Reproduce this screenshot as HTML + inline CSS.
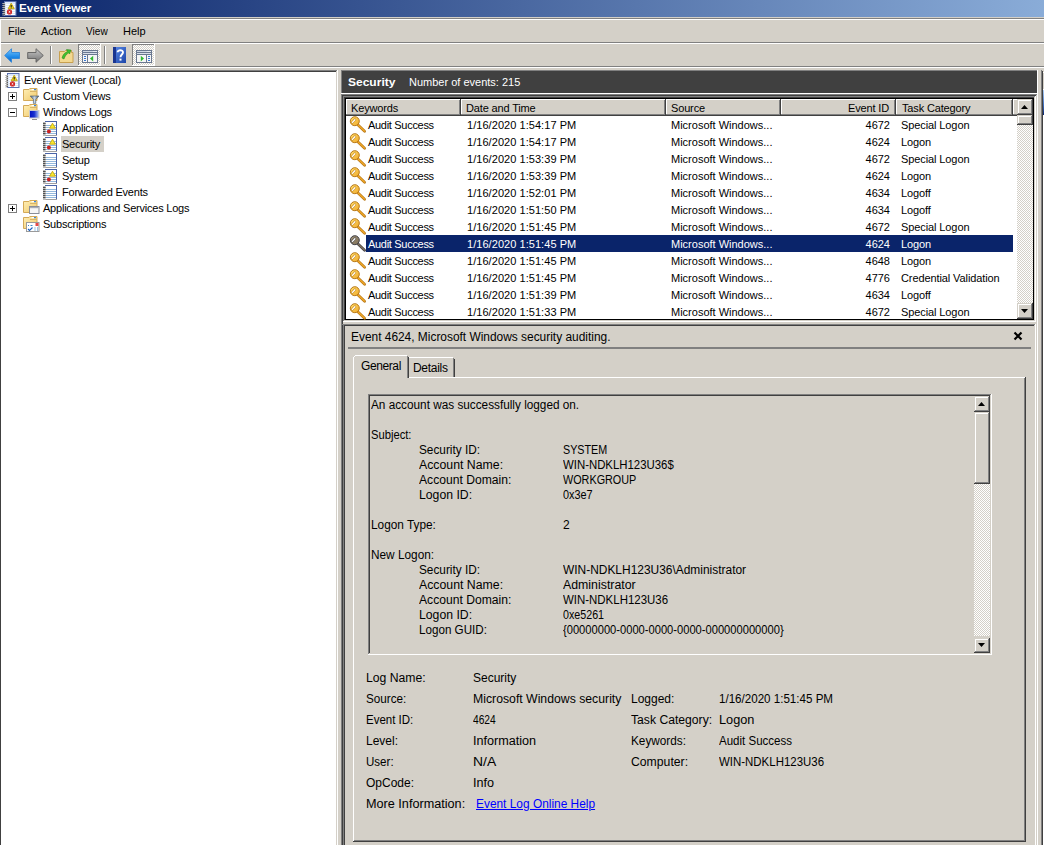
<!DOCTYPE html><html><head><meta charset="utf-8"><style>
html,body{margin:0;padding:0;width:1044px;height:845px;overflow:hidden;background:#d4d0c8;position:relative}
body>div,body>span,body>svg{position:absolute;display:block}
.t{font-family:"Liberation Sans",sans-serif;line-height:1.15;white-space:nowrap}
svg{overflow:visible}
</style></head><body>
<div style="left:0px;top:0px;width:1044px;height:17px;background:linear-gradient(90deg,#0a246a 0px,#a6caf0 1273px);"></div>
<svg style="left:2px;top:1px" width="15" height="16" viewBox="0 0 15 16"><rect x="2.5" y="0.5" width="11.5" height="14" fill="#dce8f8" stroke="#5a70b0"/>
<path d="M4 3.5h9M4 5.5h9M4 7.5h9M4 9.5h9M4 11.5h9M4 13.5h9" stroke="#ffffff"/>
<path d="M0.3 2.5h2.7M0.3 4.5h2.7M0.3 6.5h2.7M0.3 8.5h2.7M0.3 10.5h2.7M0.3 12.5h2.7M0.3 14h2.7" stroke="#b0b0b0" stroke-width="1.1"/><path d="M1.5 3.5h1.5M1.5 5.5h1.5M1.5 7.5h1.5M1.5 9.5h1.5M1.5 11.5h1.5M1.5 13.5h1.5" stroke="#606060"/>
<path d="M9.2 2.2 L12.3 7.8 L6.1 7.8Z" fill="#f0d820" stroke="#b89800" stroke-width="0.8" stroke-linejoin="round"/>
<path d="M9.2 4v2" stroke="#202020" stroke-width="1.1"/><rect x="8.7" y="6.4" width="1" height="0.9" fill="#202020"/>
<circle cx="7.5" cy="10.9" r="2.6" fill="#d02424"/><path d="M6.7 10.1l1.6 1.6M8.3 10.1l-1.6 1.6" stroke="#fff" stroke-width="0.9"/></svg>
<span class="t" style="left:19px;top:2.4px;font-size:11.5px;color:#fff;font-weight:bold;letter-spacing:0px;transform:scaleX(1.0141);transform-origin:0 0;">Event Viewer</span>
<div style="left:0px;top:17px;width:1044px;height:1px;background:#d4d0c8;"></div>
<div style="left:0px;top:18px;width:1044px;height:1px;background:#808080;"></div>
<div style="left:0px;top:19px;width:1044px;height:1px;background:#ffffff;"></div>
<div style="left:0px;top:20px;width:1px;height:23px;background:#ffffff;"></div>
<div style="left:1px;top:42px;width:1043px;height:1px;background:#808080;"></div>
<div style="left:0px;top:43px;width:1044px;height:1px;background:#ffffff;"></div>
<span class="t" style="left:8px;top:24.86px;font-size:11px;color:#000;font-weight:normal;letter-spacing:0px;transform:scaleX(1.0000);transform-origin:0 0;">File</span>
<span class="t" style="left:41px;top:24.86px;font-size:11px;color:#000;font-weight:normal;letter-spacing:0px;transform:scaleX(1.0000);transform-origin:0 0;">Action</span>
<span class="t" style="left:86px;top:24.86px;font-size:11px;color:#000;font-weight:normal;letter-spacing:0px;transform:scaleX(0.9167);transform-origin:0 0;">View</span>
<span class="t" style="left:123px;top:24.86px;font-size:11px;color:#000;font-weight:normal;letter-spacing:0px;transform:scaleX(1.0000);transform-origin:0 0;">Help</span>
<div style="left:0px;top:44px;width:1px;height:22px;background:#ffffff;"></div>
<div style="left:0px;top:66px;width:1044px;height:1px;background:#808080;"></div>
<div style="left:0px;top:67px;width:1044px;height:1px;background:#ffffff;"></div>
<svg style="left:4px;top:48px" width="17" height="15" viewBox="0 0 17 15"><defs><linearGradient id="gb" x1="0" y1="0" x2="0" y2="1"><stop offset="0" stop-color="#7cc8ff"/><stop offset="0.6" stop-color="#1d8ae8"/><stop offset="1" stop-color="#0a5cc0"/></linearGradient></defs>
<path d="M0.7 7.5 L7.5 0.7 L7.5 4.5 L15.5 4.5 L15.5 10.5 L7.5 10.5 L7.5 14.3 Z" fill="url(#gb)" stroke="#2f86d8" stroke-width="0.9"/></svg>
<svg style="left:27px;top:48px" width="17" height="15" viewBox="0 0 17 15"><defs><linearGradient id="gg" x1="0" y1="0" x2="0" y2="1"><stop offset="0" stop-color="#c8c8c8"/><stop offset="1" stop-color="#707070"/></linearGradient></defs>
<path d="M16.3 7.5 L9 0.7 L9 4.5 L0.7 4.5 L0.7 10.5 L9 10.5 L9 14.3 Z" fill="url(#gg)" stroke="#606060" stroke-width="0.9"/></svg>
<div style="left:50px;top:46px;width:1px;height:18px;background:#808080;"></div>
<div style="left:51px;top:46px;width:1px;height:18px;background:#ffffff;"></div>
<svg style="left:59px;top:48px" width="15" height="15" viewBox="0 0 15 15"><path d="M0.5 3.5 h5 l1 -1 h6 v2 h1.5 v10 h-13.5z" fill="#f3d890" stroke="#c8a050"/>
<path d="M3 10 C4 6 6 4.5 8.5 3.5 L7.5 1.5 L12 2 L10.5 6 L9.8 4.8 C7.5 6 6 8 5 11z" fill="#40c030" stroke="#208010" stroke-width="0.5"/></svg>
<div style="left:78px;top:44px;width:23px;height:22px;background:repeating-conic-gradient(#ffffff 0 25%, #d4d0c8 0 50%) 0 0/2px 2px;"></div>
<div style="left:78px;top:44px;width:23px;height:1px;background:#808080;"></div>
<div style="left:78px;top:44px;width:1px;height:22px;background:#808080;"></div>
<div style="left:78px;top:65px;width:23px;height:1px;background:#ffffff;"></div>
<div style="left:100px;top:44px;width:1px;height:22px;background:#ffffff;"></div>
<div style="left:132px;top:44px;width:23px;height:22px;background:repeating-conic-gradient(#ffffff 0 25%, #d4d0c8 0 50%) 0 0/2px 2px;"></div>
<div style="left:132px;top:44px;width:23px;height:1px;background:#808080;"></div>
<div style="left:132px;top:44px;width:1px;height:22px;background:#808080;"></div>
<div style="left:132px;top:65px;width:23px;height:1px;background:#ffffff;"></div>
<div style="left:154px;top:44px;width:1px;height:22px;background:#ffffff;"></div>
<svg style="left:82px;top:50px" width="16" height="13" viewBox="0 0 16 13"><rect x="0.5" y="0.5" width="15" height="12" fill="#f6f6f6" stroke="#6a7890"/>
<rect x="1" y="1" width="14" height="1.5" fill="#d0d8e4"/><rect x="11.5" y="1" width="1" height="1" fill="#fff"/><rect x="13.5" y="1" width="1" height="1" fill="#fff"/>
<path d="M1 2.5h14M1 4.5h14" stroke="#6a7890"/><rect x="1" y="3" width="14" height="1" fill="#d8dee8"/>
<path d="M5.5 5v7" stroke="#6a7890"/>
<path d="M2 6.5h2M2 8.5h2M2 10.5h2" stroke="#3a78d0"/>
<path d="M11.2 5.8 L8 8.6 L11.2 11.4 Z" fill="#30b830"/></svg>
<div style="left:104px;top:46px;width:1px;height:18px;background:#808080;"></div>
<div style="left:105px;top:46px;width:1px;height:18px;background:#ffffff;"></div>
<svg style="left:113px;top:47px" width="13" height="16" viewBox="0 0 13 16"><defs><linearGradient id="hb" x1="0" y1="0" x2="1" y2="1"><stop offset="0" stop-color="#5a8ae8"/><stop offset="1" stop-color="#1e46a8"/></linearGradient></defs>
<rect x="0" y="0" width="13" height="16" fill="url(#hb)"/><rect x="0" y="0" width="3" height="16" fill="#1a3590"/>
<path d="M4.6 5.2 C4.6 2.6 10 2.6 10 5.2 C10 7.4 7.5 7.6 7.5 10.2" stroke="#fff" stroke-width="1.9" fill="none"/><rect x="6.5" y="11.6" width="2" height="2" fill="#fff"/></svg>
<svg style="left:136px;top:50px" width="16" height="13" viewBox="0 0 16 13"><rect x="0.5" y="0.5" width="15" height="12" fill="#f6f6f6" stroke="#6a7890"/>
<rect x="1" y="1" width="14" height="1.5" fill="#d0d8e4"/><rect x="11.5" y="1" width="1" height="1" fill="#fff"/><rect x="13.5" y="1" width="1" height="1" fill="#fff"/>
<path d="M1 2.5h14M1 4.5h14" stroke="#6a7890"/><rect x="1" y="3" width="14" height="1" fill="#d8dee8"/>
<path d="M10.5 5v7" stroke="#6a7890"/>
<path d="M12 6.5h2M12 8.5h2M12 10.5h2" stroke="#3a78d0"/>
<path d="M4.8 5.8 L8 8.6 L4.8 11.4 Z" fill="#30b830"/></svg>
<div style="left:1px;top:72px;width:335px;height:773px;background:#ffffff;"></div>
<div style="left:0px;top:70px;width:337px;height:1px;background:#808080;"></div>
<div style="left:0px;top:71px;width:336px;height:1px;background:#404040;"></div>
<div style="left:0px;top:71px;width:1px;height:774px;background:#404040;"></div>
<div style="left:336px;top:71px;width:1px;height:774px;background:#d4d0c8;"></div>
<div style="left:337px;top:70px;width:1px;height:775px;background:#ffffff;"></div>
<svg style="left:5px;top:73px" width="15" height="16" viewBox="0 0 15 16"><rect x="2.5" y="0.5" width="11.5" height="14" fill="#dce8f8" stroke="#5a70b0"/>
<path d="M4 3.5h9M4 5.5h9M4 7.5h9M4 9.5h9M4 11.5h9M4 13.5h9" stroke="#ffffff"/>
<path d="M0.3 2.5h2.7M0.3 4.5h2.7M0.3 6.5h2.7M0.3 8.5h2.7M0.3 10.5h2.7M0.3 12.5h2.7M0.3 14h2.7" stroke="#b0b0b0" stroke-width="1.1"/><path d="M1.5 3.5h1.5M1.5 5.5h1.5M1.5 7.5h1.5M1.5 9.5h1.5M1.5 11.5h1.5M1.5 13.5h1.5" stroke="#606060"/>
<path d="M9.2 2.2 L12.3 7.8 L6.1 7.8Z" fill="#f0d820" stroke="#b89800" stroke-width="0.8" stroke-linejoin="round"/>
<path d="M9.2 4v2" stroke="#202020" stroke-width="1.1"/><rect x="8.7" y="6.4" width="1" height="0.9" fill="#202020"/>
<circle cx="7.5" cy="10.9" r="2.6" fill="#d02424"/><path d="M6.7 10.1l1.6 1.6M8.3 10.1l-1.6 1.6" stroke="#fff" stroke-width="0.9"/></svg>
<span class="t" style="left:24px;top:73.86px;font-size:11px;color:#000;font-weight:normal;letter-spacing:-0.22px;">Event Viewer (Local)</span>
<svg style="left:8px;top:92px" width="9" height="9" viewBox="0 0 9 9"><rect x="0.5" y="0.5" width="8" height="8" fill="#fff" stroke="#808080"/><path d="M2 4.5h5" stroke="#000"/><path d="M4.5 2v5" stroke="#000"/></svg>
<svg style="left:23px;top:88px" width="17" height="17" viewBox="0 0 17 17"><defs><linearGradient id="fg" x1="0" y1="0" x2="1" y2="1"><stop offset="0" stop-color="#fff0b8"/><stop offset="1" stop-color="#f0c868"/></linearGradient></defs>
<path d="M0.5 1.5h5.5l0.8 -1h7.2v12h-13.5z" fill="url(#fg)" stroke="#d4aa58"/>
<path d="M7 3.5h7" stroke="#d8b468"/><rect x="8.5" y="1" width="2.5" height="1.2" fill="#fff"/><rect x="11" y="1" width="2" height="1.2" fill="#3a88e0"/><defs><linearGradient id="fu" x1="0" y1="0" x2="1" y2="0"><stop offset="0" stop-color="#506070"/><stop offset="0.5" stop-color="#c8d8e8"/><stop offset="1" stop-color="#405060"/></linearGradient></defs><path d="M7.2 8h8.8l-3.2 3.4v4h-2.4v-4z" fill="url(#fu)" stroke="#4a5a6a" stroke-width="0.6"/></svg>
<span class="t" style="left:43px;top:89.86px;font-size:11px;color:#000;font-weight:normal;letter-spacing:-0.22px;">Custom Views</span>
<svg style="left:8px;top:108px" width="9" height="9" viewBox="0 0 9 9"><rect x="0.5" y="0.5" width="8" height="8" fill="#fff" stroke="#808080"/><path d="M2 4.5h5" stroke="#000"/></svg>
<svg style="left:23px;top:104px" width="17" height="17" viewBox="0 0 17 17"><defs><linearGradient id="fg" x1="0" y1="0" x2="1" y2="1"><stop offset="0" stop-color="#fff0b8"/><stop offset="1" stop-color="#f0c868"/></linearGradient></defs>
<path d="M0.5 1.5h5.5l0.8 -1h7.2v12h-13.5z" fill="url(#fg)" stroke="#d4aa58"/>
<path d="M7 3.5h7" stroke="#d8b468"/><rect x="8.5" y="1" width="2.5" height="1.2" fill="#fff"/><rect x="11" y="1" width="2" height="1.2" fill="#3a88e0"/><defs><linearGradient id="mo" x1="0" y1="0" x2="1" y2="0"><stop offset="0" stop-color="#0010c0"/><stop offset="0.5" stop-color="#1830d0"/><stop offset="1" stop-color="#b0c8f0"/></linearGradient></defs><rect x="6.5" y="6.5" width="9.5" height="7.5" fill="url(#mo)" stroke="#c8c8c8"/><path d="M9 15.5h5" stroke="#909090"/></svg>
<span class="t" style="left:43px;top:105.86px;font-size:11px;color:#000;font-weight:normal;letter-spacing:-0.22px;">Windows Logs</span>
<svg style="left:43px;top:121px" width="14" height="15" viewBox="0 0 14 15"><rect x="2" y="0" width="12" height="15" fill="#fff"/>
<path d="M2 0.5h12M13.5 0v15" stroke="#4a64a8"/><path d="M2 14.5h12" stroke="#a0a0a0"/>
<path d="M3 4.5h10M3 6.5h10M3 8.5h10M3 10.5h10M3 12.5h10" stroke="#94b8dc"/>
<rect x="0" y="1" width="2.6" height="14" fill="#b8b8b8"/>
<path d="M0 2.5h2.6M0 4.5h2.6M0 6.5h2.6M0 8.5h2.6M0 10.5h2.6M0 12.5h2.6" stroke="#505050"/><path d="M9.5 2.2 L12.4 7.2 L6.6 7.2Z" fill="#f8e830" stroke="#c0a000" stroke-width="0.8" stroke-linejoin="round"/>
<circle cx="5.9" cy="10.5" r="2" fill="#c82020"/></svg>
<span class="t" style="left:62px;top:121.86px;font-size:11px;color:#000;font-weight:normal;letter-spacing:-0.22px;">Application</span>
<div style="left:61px;top:136px;width:43px;height:16px;background:#d4d0c8;"></div>
<svg style="left:43px;top:137px" width="14" height="15" viewBox="0 0 14 15"><rect x="2" y="0" width="12" height="15" fill="#fff"/>
<path d="M2 0.5h12M13.5 0v15" stroke="#4a64a8"/><path d="M2 14.5h12" stroke="#a0a0a0"/>
<path d="M3 4.5h10M3 6.5h10M3 8.5h10M3 10.5h10M3 12.5h10" stroke="#94b8dc"/>
<rect x="0" y="1" width="2.6" height="14" fill="#b8b8b8"/>
<path d="M0 2.5h2.6M0 4.5h2.6M0 6.5h2.6M0 8.5h2.6M0 10.5h2.6M0 12.5h2.6" stroke="#505050"/><path d="M9.5 2.2 L12.4 7.2 L6.6 7.2Z" fill="#f8e830" stroke="#c0a000" stroke-width="0.8" stroke-linejoin="round"/>
<circle cx="5.9" cy="10.5" r="2" fill="#c82020"/></svg>
<span class="t" style="left:62px;top:137.86px;font-size:11px;color:#000;font-weight:normal;letter-spacing:-0.22px;">Security</span>
<svg style="left:43px;top:153px" width="14" height="15" viewBox="0 0 14 15"><rect x="2" y="0" width="12" height="15" fill="#fff"/>
<path d="M2 0.5h12M13.5 0v15" stroke="#4a64a8"/><path d="M2 14.5h12" stroke="#a0a0a0"/>
<path d="M3 4.5h10M3 6.5h10M3 8.5h10M3 10.5h10M3 12.5h10" stroke="#94b8dc"/>
<rect x="0" y="1" width="2.6" height="14" fill="#b8b8b8"/>
<path d="M0 2.5h2.6M0 4.5h2.6M0 6.5h2.6M0 8.5h2.6M0 10.5h2.6M0 12.5h2.6" stroke="#505050"/></svg>
<span class="t" style="left:62px;top:153.86px;font-size:11px;color:#000;font-weight:normal;letter-spacing:-0.22px;">Setup</span>
<svg style="left:43px;top:169px" width="14" height="15" viewBox="0 0 14 15"><rect x="2" y="0" width="12" height="15" fill="#fff"/>
<path d="M2 0.5h12M13.5 0v15" stroke="#4a64a8"/><path d="M2 14.5h12" stroke="#a0a0a0"/>
<path d="M3 4.5h10M3 6.5h10M3 8.5h10M3 10.5h10M3 12.5h10" stroke="#94b8dc"/>
<rect x="0" y="1" width="2.6" height="14" fill="#b8b8b8"/>
<path d="M0 2.5h2.6M0 4.5h2.6M0 6.5h2.6M0 8.5h2.6M0 10.5h2.6M0 12.5h2.6" stroke="#505050"/><path d="M9.5 2.2 L12.4 7.2 L6.6 7.2Z" fill="#f8e830" stroke="#c0a000" stroke-width="0.8" stroke-linejoin="round"/>
<circle cx="5.9" cy="10.5" r="2" fill="#c82020"/></svg>
<span class="t" style="left:62px;top:169.86px;font-size:11px;color:#000;font-weight:normal;letter-spacing:-0.22px;">System</span>
<svg style="left:43px;top:185px" width="14" height="15" viewBox="0 0 14 15"><rect x="2" y="0" width="12" height="15" fill="#fff"/>
<path d="M2 0.5h12M13.5 0v15" stroke="#4a64a8"/><path d="M2 14.5h12" stroke="#a0a0a0"/>
<path d="M3 4.5h10M3 6.5h10M3 8.5h10M3 10.5h10M3 12.5h10" stroke="#94b8dc"/>
<rect x="0" y="1" width="2.6" height="14" fill="#b8b8b8"/>
<path d="M0 2.5h2.6M0 4.5h2.6M0 6.5h2.6M0 8.5h2.6M0 10.5h2.6M0 12.5h2.6" stroke="#505050"/></svg>
<span class="t" style="left:62px;top:185.86px;font-size:11px;color:#000;font-weight:normal;letter-spacing:-0.22px;">Forwarded Events</span>
<svg style="left:8px;top:204px" width="9" height="9" viewBox="0 0 9 9"><rect x="0.5" y="0.5" width="8" height="8" fill="#fff" stroke="#808080"/><path d="M2 4.5h5" stroke="#000"/><path d="M4.5 2v5" stroke="#000"/></svg>
<svg style="left:23px;top:200px" width="17" height="17" viewBox="0 0 17 17"><defs><linearGradient id="fg" x1="0" y1="0" x2="1" y2="1"><stop offset="0" stop-color="#fff0b8"/><stop offset="1" stop-color="#f0c868"/></linearGradient></defs>
<path d="M0.5 1.5h5.5l0.8 -1h7.2v12h-13.5z" fill="url(#fg)" stroke="#d4aa58"/>
<path d="M7 3.5h7" stroke="#d8b468"/><rect x="8.5" y="1" width="2.5" height="1.2" fill="#fff"/><rect x="11" y="1" width="2" height="1.2" fill="#3a88e0"/><rect x="6.5" y="6.5" width="9.5" height="7" fill="#f6f6f6" stroke="#8a8e98"/><rect x="7" y="7" width="8.5" height="1.2" fill="#a8acb4"/></svg>
<span class="t" style="left:43px;top:201.86px;font-size:11px;color:#000;font-weight:normal;letter-spacing:-0.22px;">Applications and Services Logs</span>
<svg style="left:23px;top:216px" width="17" height="17" viewBox="0 0 17 17"><defs><linearGradient id="fg" x1="0" y1="0" x2="1" y2="1"><stop offset="0" stop-color="#fff0b8"/><stop offset="1" stop-color="#f0c868"/></linearGradient></defs>
<path d="M0.5 1.5h5.5l0.8 -1h7.2v12h-13.5z" fill="url(#fg)" stroke="#d4aa58"/>
<path d="M7 3.5h7" stroke="#d8b468"/><rect x="8.5" y="1" width="2.5" height="1.2" fill="#fff"/><rect x="11" y="1" width="2" height="1.2" fill="#3a88e0"/><rect x="3.5" y="6.5" width="12.5" height="9" fill="#fff" stroke="#9a9a9a"/><rect x="12.5" y="7" width="3" height="3" fill="#e84848"/><path d="M5 9.5h1M7.5 9.5h2M11.5 12h1M14 12h1M11.5 14h1M14 14h1" stroke="#3a88c8"/><path d="M5 13l1.5 1.5 3-3" stroke="#1a60c0" stroke-width="1.1" fill="none"/></svg>
<span class="t" style="left:43px;top:217.86px;font-size:11px;color:#000;font-weight:normal;letter-spacing:-0.22px;">Subscriptions</span>
<div style="left:342px;top:71px;width:695px;height:22px;background:#404040;"></div>
<div style="left:341px;top:70px;width:696px;height:1px;background:#808080;"></div>
<div style="left:341px;top:70px;width:1px;height:23px;background:#808080;"></div>
<span class="t" style="left:348px;top:76.4px;font-size:11.5px;color:#fff;font-weight:bold;letter-spacing:0px;transform:scaleX(1.0444);transform-origin:0 0;">Security</span>
<span class="t" style="left:409px;top:75.86px;font-size:11px;color:#fff;font-weight:normal;letter-spacing:0px;">Number of events: 215</span>
<div style="left:341px;top:93px;width:696px;height:1px;background:#ffffff;"></div>
<div style="left:1037px;top:70px;width:1px;height:775px;background:#ffffff;"></div>
<div style="left:1041px;top:70px;width:1px;height:775px;background:#808080;"></div>
<div style="left:1042px;top:71px;width:1px;height:774px;background:#404040;"></div>
<div style="left:1043px;top:72px;width:1px;height:773px;background:#ffffff;"></div>
<div style="left:1043px;top:73px;width:1px;height:16px;background:#d4d0c8;"></div>
<div style="left:1043px;top:90px;width:1px;height:25px;background:linear-gradient(180deg,#b0d0f8,#4070c0 60%,#0a246a);"></div>
<div style="left:341px;top:94px;width:1px;height:751px;background:#808080;"></div>
<div style="left:342px;top:95px;width:1px;height:750px;background:#404040;"></div>
<div style="left:341px;top:94px;width:696px;height:1px;background:#808080;"></div>
<div style="left:342px;top:95px;width:694px;height:1px;background:#404040;"></div>
<div style="left:1036px;top:95px;width:1px;height:750px;background:#d4d0c8;"></div>
<div style="left:343px;top:96px;width:692px;height:1px;background:#808080;"></div>
<div style="left:344px;top:97px;width:690px;height:1px;background:#404040;"></div>
<div style="left:345px;top:98px;width:689px;height:1px;background:#000;"></div>
<div style="left:343px;top:96px;width:1px;height:226px;background:#808080;"></div>
<div style="left:344px;top:97px;width:1px;height:224px;background:#404040;"></div>
<div style="left:345px;top:98px;width:1px;height:222px;background:#000;"></div>
<div style="left:346px;top:99px;width:687px;height:220px;background:#ffffff;"></div>
<div style="left:345px;top:319px;width:689px;height:1px;background:#000;"></div>
<div style="left:1033px;top:98px;width:1px;height:222px;background:#000;"></div>
<div style="left:344px;top:320px;width:691px;height:1px;background:#d4d0c8;"></div>
<div style="left:1034px;top:97px;width:1px;height:224px;background:#d4d0c8;"></div>
<div style="left:343px;top:321px;width:693px;height:1px;background:#ffffff;"></div>
<div style="left:1035px;top:96px;width:1px;height:226px;background:#ffffff;"></div>
<div style="left:346px;top:99px;width:115px;height:17px;background:#d4d0c8;"></div>
<div style="left:346px;top:99px;width:115px;height:1px;background:#ffffff;"></div>
<div style="left:346px;top:99px;width:1px;height:16px;background:#ffffff;"></div>
<div style="left:346px;top:114px;width:115px;height:1px;background:#808080;"></div>
<div style="left:346px;top:115px;width:115px;height:1px;background:#404040;"></div>
<div style="left:459px;top:100px;width:1px;height:15px;background:#808080;"></div>
<div style="left:460px;top:99px;width:1px;height:17px;background:#404040;"></div>
<span class="t" style="left:351px;top:101.86px;font-size:11px;color:#000;font-weight:normal;letter-spacing:-0.15px;">Keywords</span>
<div style="left:461px;top:99px;width:205px;height:17px;background:#d4d0c8;"></div>
<div style="left:461px;top:99px;width:205px;height:1px;background:#ffffff;"></div>
<div style="left:461px;top:99px;width:1px;height:16px;background:#ffffff;"></div>
<div style="left:461px;top:114px;width:205px;height:1px;background:#808080;"></div>
<div style="left:461px;top:115px;width:205px;height:1px;background:#404040;"></div>
<div style="left:664px;top:100px;width:1px;height:15px;background:#808080;"></div>
<div style="left:665px;top:99px;width:1px;height:17px;background:#404040;"></div>
<span class="t" style="left:466px;top:101.86px;font-size:11px;color:#000;font-weight:normal;letter-spacing:-0.15px;">Date and Time</span>
<div style="left:666px;top:99px;width:115px;height:17px;background:#d4d0c8;"></div>
<div style="left:666px;top:99px;width:115px;height:1px;background:#ffffff;"></div>
<div style="left:666px;top:99px;width:1px;height:16px;background:#ffffff;"></div>
<div style="left:666px;top:114px;width:115px;height:1px;background:#808080;"></div>
<div style="left:666px;top:115px;width:115px;height:1px;background:#404040;"></div>
<div style="left:779px;top:100px;width:1px;height:15px;background:#808080;"></div>
<div style="left:780px;top:99px;width:1px;height:17px;background:#404040;"></div>
<span class="t" style="left:671px;top:101.86px;font-size:11px;color:#000;font-weight:normal;letter-spacing:-0.15px;">Source</span>
<div style="left:781px;top:99px;width:115px;height:17px;background:#d4d0c8;"></div>
<div style="left:781px;top:99px;width:115px;height:1px;background:#ffffff;"></div>
<div style="left:781px;top:99px;width:1px;height:16px;background:#ffffff;"></div>
<div style="left:781px;top:114px;width:115px;height:1px;background:#808080;"></div>
<div style="left:781px;top:115px;width:115px;height:1px;background:#404040;"></div>
<div style="left:894px;top:100px;width:1px;height:15px;background:#808080;"></div>
<div style="left:895px;top:99px;width:1px;height:17px;background:#404040;"></div>
<span class="t" style="left:781px;top:101.86px;font-size:11px;color:#000;font-weight:normal;letter-spacing:-0.15px;width:108px;text-align:right">Event ID</span>
<div style="left:896px;top:99px;width:117px;height:17px;background:#d4d0c8;"></div>
<div style="left:896px;top:99px;width:117px;height:1px;background:#ffffff;"></div>
<div style="left:896px;top:99px;width:1px;height:16px;background:#ffffff;"></div>
<div style="left:896px;top:114px;width:117px;height:1px;background:#808080;"></div>
<div style="left:896px;top:115px;width:117px;height:1px;background:#404040;"></div>
<div style="left:1011px;top:100px;width:1px;height:15px;background:#808080;"></div>
<div style="left:1012px;top:99px;width:1px;height:17px;background:#404040;"></div>
<span class="t" style="left:902px;top:101.86px;font-size:11px;color:#000;font-weight:normal;letter-spacing:-0.15px;">Task Category</span>
<div style="left:1013px;top:99px;width:4px;height:17px;background:#d4d0c8;"></div>
<div style="left:1013px;top:99px;width:4px;height:1px;background:#ffffff;"></div>
<div style="left:1013px;top:99px;width:1px;height:17px;background:#ffffff;"></div>
<div style="left:1013px;top:114px;width:4px;height:1px;background:#808080;"></div>
<div style="left:1013px;top:115px;width:4px;height:1px;background:#404040;"></div>
<svg style="left:346px;top:116px" width="20" height="17" viewBox="0 0 20 17"><defs><linearGradient id="kgn" x1="0" y1="0" x2="1" y2="1"><stop offset="0" stop-color="#ffe070"/><stop offset="1" stop-color="#f0a828"/></linearGradient></defs>
<path d="M11.8 8.8 L18.6 15.2" stroke="#b87818" stroke-width="2.7" stroke-linecap="round"/>
<path d="M11.8 8.8 L18.4 15" stroke="#f0a828" stroke-width="1.3" stroke-linecap="round"/>
<circle cx="8.8" cy="5.2" r="4.5" fill="url(#kgn)" stroke="#b87818" stroke-width="1"/>
<path d="M6.4 6.4 L8.9 3.7" stroke="#b87818" stroke-width="2.5" stroke-linecap="round" opacity="0.7"/>
<path d="M6.4 6.4 L8.9 3.7" stroke="#fff" stroke-width="1.3" stroke-linecap="round"/></svg>
<span class="t" style="left:368px;top:118.86px;font-size:11px;color:#000;font-weight:normal;letter-spacing:-0.3px;">Audit Success</span>
<span class="t" style="left:467px;top:118.86px;font-size:11px;color:#000;font-weight:normal;letter-spacing:0.05px;">1/16/2020 1:54:17 PM</span>
<span class="t" style="left:671px;top:118.86px;font-size:11px;color:#000;font-weight:normal;letter-spacing:0px;">Microsoft Windows...</span>
<span class="t" style="left:781px;top:118.86px;font-size:11px;color:#000;font-weight:normal;letter-spacing:0px;width:109px;text-align:right">4672</span>
<span class="t" style="left:901px;top:118.86px;font-size:11px;color:#000;font-weight:normal;letter-spacing:-0.1px;">Special Logon</span>
<svg style="left:346px;top:133px" width="20" height="17" viewBox="0 0 20 17"><defs><linearGradient id="kgn" x1="0" y1="0" x2="1" y2="1"><stop offset="0" stop-color="#ffe070"/><stop offset="1" stop-color="#f0a828"/></linearGradient></defs>
<path d="M11.8 8.8 L18.6 15.2" stroke="#b87818" stroke-width="2.7" stroke-linecap="round"/>
<path d="M11.8 8.8 L18.4 15" stroke="#f0a828" stroke-width="1.3" stroke-linecap="round"/>
<circle cx="8.8" cy="5.2" r="4.5" fill="url(#kgn)" stroke="#b87818" stroke-width="1"/>
<path d="M6.4 6.4 L8.9 3.7" stroke="#b87818" stroke-width="2.5" stroke-linecap="round" opacity="0.7"/>
<path d="M6.4 6.4 L8.9 3.7" stroke="#fff" stroke-width="1.3" stroke-linecap="round"/></svg>
<span class="t" style="left:368px;top:135.86px;font-size:11px;color:#000;font-weight:normal;letter-spacing:-0.3px;">Audit Success</span>
<span class="t" style="left:467px;top:135.86px;font-size:11px;color:#000;font-weight:normal;letter-spacing:0.05px;">1/16/2020 1:54:17 PM</span>
<span class="t" style="left:671px;top:135.86px;font-size:11px;color:#000;font-weight:normal;letter-spacing:0px;">Microsoft Windows...</span>
<span class="t" style="left:781px;top:135.86px;font-size:11px;color:#000;font-weight:normal;letter-spacing:0px;width:109px;text-align:right">4624</span>
<span class="t" style="left:901px;top:135.86px;font-size:11px;color:#000;font-weight:normal;letter-spacing:-0.1px;">Logon</span>
<svg style="left:346px;top:150px" width="20" height="17" viewBox="0 0 20 17"><defs><linearGradient id="kgn" x1="0" y1="0" x2="1" y2="1"><stop offset="0" stop-color="#ffe070"/><stop offset="1" stop-color="#f0a828"/></linearGradient></defs>
<path d="M11.8 8.8 L18.6 15.2" stroke="#b87818" stroke-width="2.7" stroke-linecap="round"/>
<path d="M11.8 8.8 L18.4 15" stroke="#f0a828" stroke-width="1.3" stroke-linecap="round"/>
<circle cx="8.8" cy="5.2" r="4.5" fill="url(#kgn)" stroke="#b87818" stroke-width="1"/>
<path d="M6.4 6.4 L8.9 3.7" stroke="#b87818" stroke-width="2.5" stroke-linecap="round" opacity="0.7"/>
<path d="M6.4 6.4 L8.9 3.7" stroke="#fff" stroke-width="1.3" stroke-linecap="round"/></svg>
<span class="t" style="left:368px;top:152.86px;font-size:11px;color:#000;font-weight:normal;letter-spacing:-0.3px;">Audit Success</span>
<span class="t" style="left:467px;top:152.86px;font-size:11px;color:#000;font-weight:normal;letter-spacing:0.05px;">1/16/2020 1:53:39 PM</span>
<span class="t" style="left:671px;top:152.86px;font-size:11px;color:#000;font-weight:normal;letter-spacing:0px;">Microsoft Windows...</span>
<span class="t" style="left:781px;top:152.86px;font-size:11px;color:#000;font-weight:normal;letter-spacing:0px;width:109px;text-align:right">4672</span>
<span class="t" style="left:901px;top:152.86px;font-size:11px;color:#000;font-weight:normal;letter-spacing:-0.1px;">Special Logon</span>
<svg style="left:346px;top:167px" width="20" height="17" viewBox="0 0 20 17"><defs><linearGradient id="kgn" x1="0" y1="0" x2="1" y2="1"><stop offset="0" stop-color="#ffe070"/><stop offset="1" stop-color="#f0a828"/></linearGradient></defs>
<path d="M11.8 8.8 L18.6 15.2" stroke="#b87818" stroke-width="2.7" stroke-linecap="round"/>
<path d="M11.8 8.8 L18.4 15" stroke="#f0a828" stroke-width="1.3" stroke-linecap="round"/>
<circle cx="8.8" cy="5.2" r="4.5" fill="url(#kgn)" stroke="#b87818" stroke-width="1"/>
<path d="M6.4 6.4 L8.9 3.7" stroke="#b87818" stroke-width="2.5" stroke-linecap="round" opacity="0.7"/>
<path d="M6.4 6.4 L8.9 3.7" stroke="#fff" stroke-width="1.3" stroke-linecap="round"/></svg>
<span class="t" style="left:368px;top:169.86px;font-size:11px;color:#000;font-weight:normal;letter-spacing:-0.3px;">Audit Success</span>
<span class="t" style="left:467px;top:169.86px;font-size:11px;color:#000;font-weight:normal;letter-spacing:0.05px;">1/16/2020 1:53:39 PM</span>
<span class="t" style="left:671px;top:169.86px;font-size:11px;color:#000;font-weight:normal;letter-spacing:0px;">Microsoft Windows...</span>
<span class="t" style="left:781px;top:169.86px;font-size:11px;color:#000;font-weight:normal;letter-spacing:0px;width:109px;text-align:right">4624</span>
<span class="t" style="left:901px;top:169.86px;font-size:11px;color:#000;font-weight:normal;letter-spacing:-0.1px;">Logon</span>
<svg style="left:346px;top:184px" width="20" height="17" viewBox="0 0 20 17"><defs><linearGradient id="kgn" x1="0" y1="0" x2="1" y2="1"><stop offset="0" stop-color="#ffe070"/><stop offset="1" stop-color="#f0a828"/></linearGradient></defs>
<path d="M11.8 8.8 L18.6 15.2" stroke="#b87818" stroke-width="2.7" stroke-linecap="round"/>
<path d="M11.8 8.8 L18.4 15" stroke="#f0a828" stroke-width="1.3" stroke-linecap="round"/>
<circle cx="8.8" cy="5.2" r="4.5" fill="url(#kgn)" stroke="#b87818" stroke-width="1"/>
<path d="M6.4 6.4 L8.9 3.7" stroke="#b87818" stroke-width="2.5" stroke-linecap="round" opacity="0.7"/>
<path d="M6.4 6.4 L8.9 3.7" stroke="#fff" stroke-width="1.3" stroke-linecap="round"/></svg>
<span class="t" style="left:368px;top:186.86px;font-size:11px;color:#000;font-weight:normal;letter-spacing:-0.3px;">Audit Success</span>
<span class="t" style="left:467px;top:186.86px;font-size:11px;color:#000;font-weight:normal;letter-spacing:0.05px;">1/16/2020 1:52:01 PM</span>
<span class="t" style="left:671px;top:186.86px;font-size:11px;color:#000;font-weight:normal;letter-spacing:0px;">Microsoft Windows...</span>
<span class="t" style="left:781px;top:186.86px;font-size:11px;color:#000;font-weight:normal;letter-spacing:0px;width:109px;text-align:right">4634</span>
<span class="t" style="left:901px;top:186.86px;font-size:11px;color:#000;font-weight:normal;letter-spacing:-0.1px;">Logoff</span>
<svg style="left:346px;top:201px" width="20" height="17" viewBox="0 0 20 17"><defs><linearGradient id="kgn" x1="0" y1="0" x2="1" y2="1"><stop offset="0" stop-color="#ffe070"/><stop offset="1" stop-color="#f0a828"/></linearGradient></defs>
<path d="M11.8 8.8 L18.6 15.2" stroke="#b87818" stroke-width="2.7" stroke-linecap="round"/>
<path d="M11.8 8.8 L18.4 15" stroke="#f0a828" stroke-width="1.3" stroke-linecap="round"/>
<circle cx="8.8" cy="5.2" r="4.5" fill="url(#kgn)" stroke="#b87818" stroke-width="1"/>
<path d="M6.4 6.4 L8.9 3.7" stroke="#b87818" stroke-width="2.5" stroke-linecap="round" opacity="0.7"/>
<path d="M6.4 6.4 L8.9 3.7" stroke="#fff" stroke-width="1.3" stroke-linecap="round"/></svg>
<span class="t" style="left:368px;top:203.86px;font-size:11px;color:#000;font-weight:normal;letter-spacing:-0.3px;">Audit Success</span>
<span class="t" style="left:467px;top:203.86px;font-size:11px;color:#000;font-weight:normal;letter-spacing:0.05px;">1/16/2020 1:51:50 PM</span>
<span class="t" style="left:671px;top:203.86px;font-size:11px;color:#000;font-weight:normal;letter-spacing:0px;">Microsoft Windows...</span>
<span class="t" style="left:781px;top:203.86px;font-size:11px;color:#000;font-weight:normal;letter-spacing:0px;width:109px;text-align:right">4634</span>
<span class="t" style="left:901px;top:203.86px;font-size:11px;color:#000;font-weight:normal;letter-spacing:-0.1px;">Logoff</span>
<svg style="left:346px;top:218px" width="20" height="17" viewBox="0 0 20 17"><defs><linearGradient id="kgn" x1="0" y1="0" x2="1" y2="1"><stop offset="0" stop-color="#ffe070"/><stop offset="1" stop-color="#f0a828"/></linearGradient></defs>
<path d="M11.8 8.8 L18.6 15.2" stroke="#b87818" stroke-width="2.7" stroke-linecap="round"/>
<path d="M11.8 8.8 L18.4 15" stroke="#f0a828" stroke-width="1.3" stroke-linecap="round"/>
<circle cx="8.8" cy="5.2" r="4.5" fill="url(#kgn)" stroke="#b87818" stroke-width="1"/>
<path d="M6.4 6.4 L8.9 3.7" stroke="#b87818" stroke-width="2.5" stroke-linecap="round" opacity="0.7"/>
<path d="M6.4 6.4 L8.9 3.7" stroke="#fff" stroke-width="1.3" stroke-linecap="round"/></svg>
<span class="t" style="left:368px;top:220.86px;font-size:11px;color:#000;font-weight:normal;letter-spacing:-0.3px;">Audit Success</span>
<span class="t" style="left:467px;top:220.86px;font-size:11px;color:#000;font-weight:normal;letter-spacing:0.05px;">1/16/2020 1:51:45 PM</span>
<span class="t" style="left:671px;top:220.86px;font-size:11px;color:#000;font-weight:normal;letter-spacing:0px;">Microsoft Windows...</span>
<span class="t" style="left:781px;top:220.86px;font-size:11px;color:#000;font-weight:normal;letter-spacing:0px;width:109px;text-align:right">4672</span>
<span class="t" style="left:901px;top:220.86px;font-size:11px;color:#000;font-weight:normal;letter-spacing:-0.1px;">Special Logon</span>
<div style="left:366px;top:235px;width:647px;height:17px;background:#0a246a;"></div>
<svg style="left:346px;top:235px" width="20" height="17" viewBox="0 0 20 17"><defs><linearGradient id="kgs" x1="0" y1="0" x2="1" y2="1"><stop offset="0" stop-color="#a09478"/><stop offset="1" stop-color="#807058"/></linearGradient></defs>
<path d="M11.8 8.8 L18.6 15.2" stroke="#404048" stroke-width="2.7" stroke-linecap="round"/>
<path d="M11.8 8.8 L18.4 15" stroke="#807058" stroke-width="1.3" stroke-linecap="round"/>
<circle cx="8.8" cy="5.2" r="4.5" fill="url(#kgs)" stroke="#404048" stroke-width="1"/>
<path d="M6.4 6.4 L8.9 3.7" stroke="#404048" stroke-width="2.5" stroke-linecap="round" opacity="0.7"/>
<path d="M6.4 6.4 L8.9 3.7" stroke="#fff" stroke-width="1.3" stroke-linecap="round"/></svg>
<span class="t" style="left:368px;top:237.86px;font-size:11px;color:#fff;font-weight:normal;letter-spacing:-0.3px;">Audit Success</span>
<span class="t" style="left:467px;top:237.86px;font-size:11px;color:#fff;font-weight:normal;letter-spacing:0.05px;">1/16/2020 1:51:45 PM</span>
<span class="t" style="left:671px;top:237.86px;font-size:11px;color:#fff;font-weight:normal;letter-spacing:0px;">Microsoft Windows...</span>
<span class="t" style="left:781px;top:237.86px;font-size:11px;color:#fff;font-weight:normal;letter-spacing:0px;width:109px;text-align:right">4624</span>
<span class="t" style="left:901px;top:237.86px;font-size:11px;color:#fff;font-weight:normal;letter-spacing:-0.1px;">Logon</span>
<svg style="left:346px;top:252px" width="20" height="17" viewBox="0 0 20 17"><defs><linearGradient id="kgn" x1="0" y1="0" x2="1" y2="1"><stop offset="0" stop-color="#ffe070"/><stop offset="1" stop-color="#f0a828"/></linearGradient></defs>
<path d="M11.8 8.8 L18.6 15.2" stroke="#b87818" stroke-width="2.7" stroke-linecap="round"/>
<path d="M11.8 8.8 L18.4 15" stroke="#f0a828" stroke-width="1.3" stroke-linecap="round"/>
<circle cx="8.8" cy="5.2" r="4.5" fill="url(#kgn)" stroke="#b87818" stroke-width="1"/>
<path d="M6.4 6.4 L8.9 3.7" stroke="#b87818" stroke-width="2.5" stroke-linecap="round" opacity="0.7"/>
<path d="M6.4 6.4 L8.9 3.7" stroke="#fff" stroke-width="1.3" stroke-linecap="round"/></svg>
<span class="t" style="left:368px;top:254.86px;font-size:11px;color:#000;font-weight:normal;letter-spacing:-0.3px;">Audit Success</span>
<span class="t" style="left:467px;top:254.86px;font-size:11px;color:#000;font-weight:normal;letter-spacing:0.05px;">1/16/2020 1:51:45 PM</span>
<span class="t" style="left:671px;top:254.86px;font-size:11px;color:#000;font-weight:normal;letter-spacing:0px;">Microsoft Windows...</span>
<span class="t" style="left:781px;top:254.86px;font-size:11px;color:#000;font-weight:normal;letter-spacing:0px;width:109px;text-align:right">4648</span>
<span class="t" style="left:901px;top:254.86px;font-size:11px;color:#000;font-weight:normal;letter-spacing:-0.1px;">Logon</span>
<svg style="left:346px;top:269px" width="20" height="17" viewBox="0 0 20 17"><defs><linearGradient id="kgn" x1="0" y1="0" x2="1" y2="1"><stop offset="0" stop-color="#ffe070"/><stop offset="1" stop-color="#f0a828"/></linearGradient></defs>
<path d="M11.8 8.8 L18.6 15.2" stroke="#b87818" stroke-width="2.7" stroke-linecap="round"/>
<path d="M11.8 8.8 L18.4 15" stroke="#f0a828" stroke-width="1.3" stroke-linecap="round"/>
<circle cx="8.8" cy="5.2" r="4.5" fill="url(#kgn)" stroke="#b87818" stroke-width="1"/>
<path d="M6.4 6.4 L8.9 3.7" stroke="#b87818" stroke-width="2.5" stroke-linecap="round" opacity="0.7"/>
<path d="M6.4 6.4 L8.9 3.7" stroke="#fff" stroke-width="1.3" stroke-linecap="round"/></svg>
<span class="t" style="left:368px;top:271.86px;font-size:11px;color:#000;font-weight:normal;letter-spacing:-0.3px;">Audit Success</span>
<span class="t" style="left:467px;top:271.86px;font-size:11px;color:#000;font-weight:normal;letter-spacing:0.05px;">1/16/2020 1:51:45 PM</span>
<span class="t" style="left:671px;top:271.86px;font-size:11px;color:#000;font-weight:normal;letter-spacing:0px;">Microsoft Windows...</span>
<span class="t" style="left:781px;top:271.86px;font-size:11px;color:#000;font-weight:normal;letter-spacing:0px;width:109px;text-align:right">4776</span>
<span class="t" style="left:901px;top:271.86px;font-size:11px;color:#000;font-weight:normal;letter-spacing:-0.1px;">Credential Validation</span>
<svg style="left:346px;top:286px" width="20" height="17" viewBox="0 0 20 17"><defs><linearGradient id="kgn" x1="0" y1="0" x2="1" y2="1"><stop offset="0" stop-color="#ffe070"/><stop offset="1" stop-color="#f0a828"/></linearGradient></defs>
<path d="M11.8 8.8 L18.6 15.2" stroke="#b87818" stroke-width="2.7" stroke-linecap="round"/>
<path d="M11.8 8.8 L18.4 15" stroke="#f0a828" stroke-width="1.3" stroke-linecap="round"/>
<circle cx="8.8" cy="5.2" r="4.5" fill="url(#kgn)" stroke="#b87818" stroke-width="1"/>
<path d="M6.4 6.4 L8.9 3.7" stroke="#b87818" stroke-width="2.5" stroke-linecap="round" opacity="0.7"/>
<path d="M6.4 6.4 L8.9 3.7" stroke="#fff" stroke-width="1.3" stroke-linecap="round"/></svg>
<span class="t" style="left:368px;top:288.86px;font-size:11px;color:#000;font-weight:normal;letter-spacing:-0.3px;">Audit Success</span>
<span class="t" style="left:467px;top:288.86px;font-size:11px;color:#000;font-weight:normal;letter-spacing:0.05px;">1/16/2020 1:51:39 PM</span>
<span class="t" style="left:671px;top:288.86px;font-size:11px;color:#000;font-weight:normal;letter-spacing:0px;">Microsoft Windows...</span>
<span class="t" style="left:781px;top:288.86px;font-size:11px;color:#000;font-weight:normal;letter-spacing:0px;width:109px;text-align:right">4634</span>
<span class="t" style="left:901px;top:288.86px;font-size:11px;color:#000;font-weight:normal;letter-spacing:-0.1px;">Logoff</span>
<svg style="left:346px;top:303px" width="20" height="17" viewBox="0 0 20 17"><defs><linearGradient id="kgn" x1="0" y1="0" x2="1" y2="1"><stop offset="0" stop-color="#ffe070"/><stop offset="1" stop-color="#f0a828"/></linearGradient></defs>
<path d="M11.8 8.8 L18.6 15.2" stroke="#b87818" stroke-width="2.7" stroke-linecap="round"/>
<path d="M11.8 8.8 L18.4 15" stroke="#f0a828" stroke-width="1.3" stroke-linecap="round"/>
<circle cx="8.8" cy="5.2" r="4.5" fill="url(#kgn)" stroke="#b87818" stroke-width="1"/>
<path d="M6.4 6.4 L8.9 3.7" stroke="#b87818" stroke-width="2.5" stroke-linecap="round" opacity="0.7"/>
<path d="M6.4 6.4 L8.9 3.7" stroke="#fff" stroke-width="1.3" stroke-linecap="round"/></svg>
<span class="t" style="left:368px;top:305.86px;font-size:11px;color:#000;font-weight:normal;letter-spacing:-0.3px;">Audit Success</span>
<span class="t" style="left:467px;top:305.86px;font-size:11px;color:#000;font-weight:normal;letter-spacing:0.05px;">1/16/2020 1:51:33 PM</span>
<span class="t" style="left:671px;top:305.86px;font-size:11px;color:#000;font-weight:normal;letter-spacing:0px;">Microsoft Windows...</span>
<span class="t" style="left:781px;top:305.86px;font-size:11px;color:#000;font-weight:normal;letter-spacing:0px;width:109px;text-align:right">4672</span>
<span class="t" style="left:901px;top:305.86px;font-size:11px;color:#000;font-weight:normal;letter-spacing:-0.1px;">Special Logon</span>
<div style="left:1017px;top:115px;width:16px;height:188px;background:repeating-conic-gradient(#ffffff 0 25%, #d4d0c8 0 50%) 0 0/2px 2px;"></div>
<div style="left:1017px;top:99px;width:16px;height:16px;background:#d4d0c8;"></div>
<div style="left:1017px;top:99px;width:16px;height:1px;background:#d4d0c8;"></div>
<div style="left:1017px;top:99px;width:1px;height:16px;background:#d4d0c8;"></div>
<div style="left:1018px;top:100px;width:14px;height:1px;background:#ffffff;"></div>
<div style="left:1018px;top:100px;width:1px;height:14px;background:#ffffff;"></div>
<div style="left:1017px;top:114px;width:16px;height:1px;background:#404040;"></div>
<div style="left:1032px;top:99px;width:1px;height:16px;background:#404040;"></div>
<div style="left:1018px;top:113px;width:14px;height:1px;background:#808080;"></div>
<div style="left:1031px;top:100px;width:1px;height:14px;background:#808080;"></div>
<svg style="left:1021px;top:105px" width="7" height="4" viewBox="0 0 7 4"><path d="M3.5 0 L7 4 L0 4z" fill="#000"/></svg>
<div style="left:1017px;top:115px;width:16px;height:10px;background:#d4d0c8;"></div>
<div style="left:1017px;top:115px;width:16px;height:1px;background:#d4d0c8;"></div>
<div style="left:1017px;top:115px;width:1px;height:10px;background:#d4d0c8;"></div>
<div style="left:1018px;top:116px;width:14px;height:1px;background:#ffffff;"></div>
<div style="left:1018px;top:116px;width:1px;height:8px;background:#ffffff;"></div>
<div style="left:1017px;top:124px;width:16px;height:1px;background:#404040;"></div>
<div style="left:1032px;top:115px;width:1px;height:10px;background:#404040;"></div>
<div style="left:1018px;top:123px;width:14px;height:1px;background:#808080;"></div>
<div style="left:1031px;top:116px;width:1px;height:8px;background:#808080;"></div>
<div style="left:1017px;top:303px;width:16px;height:16px;background:#d4d0c8;"></div>
<div style="left:1017px;top:303px;width:16px;height:1px;background:#d4d0c8;"></div>
<div style="left:1017px;top:303px;width:1px;height:16px;background:#d4d0c8;"></div>
<div style="left:1018px;top:304px;width:14px;height:1px;background:#ffffff;"></div>
<div style="left:1018px;top:304px;width:1px;height:14px;background:#ffffff;"></div>
<div style="left:1017px;top:318px;width:16px;height:1px;background:#404040;"></div>
<div style="left:1032px;top:303px;width:1px;height:16px;background:#404040;"></div>
<div style="left:1018px;top:317px;width:14px;height:1px;background:#808080;"></div>
<div style="left:1031px;top:304px;width:1px;height:14px;background:#808080;"></div>
<svg style="left:1021px;top:309px" width="7" height="4" viewBox="0 0 7 4"><path d="M0 0 L7 0 L3.5 4z" fill="#000"/></svg>
<div style="left:345px;top:326px;width:691px;height:519px;background:#d4d0c8;"></div>
<div style="left:341px;top:324px;width:694px;height:1px;background:#808080;"></div>
<div style="left:342px;top:325px;width:692px;height:1px;background:#404040;"></div>
<div style="left:1035px;top:324px;width:1px;height:521px;background:#ffffff;"></div>
<div style="left:1034px;top:325px;width:1px;height:520px;background:#d4d0c8;"></div>
<div style="left:343px;top:325px;width:1px;height:520px;background:#808080;"></div>
<div style="left:344px;top:326px;width:1px;height:519px;background:#404040;"></div>
<span class="t" style="left:351px;top:330.94px;font-size:12px;color:#000;font-weight:normal;letter-spacing:0px;transform:scaleX(0.9923);transform-origin:0 0;">Event 4624, Microsoft Windows security auditing.</span>
<svg style="left:1013px;top:331px" width="10" height="10" viewBox="0 0 10 10"><path d="M1.5 1.5 L8.5 8.5 M8.5 1.5 L1.5 8.5" stroke="#000" stroke-width="2.2"/></svg>
<div style="left:348px;top:347px;width:683px;height:1px;background:#808080;"></div>
<div style="left:348px;top:348px;width:683px;height:1px;background:#808080;"></div>
<div style="left:353px;top:377px;width:673px;height:1px;background:#ffffff;"></div>
<div style="left:353px;top:377px;width:1px;height:464px;background:#ffffff;"></div>
<div style="left:1024px;top:378px;width:1px;height:463px;background:#808080;"></div>
<div style="left:1025px;top:377px;width:1px;height:465px;background:#404040;"></div>
<div style="left:354px;top:840px;width:671px;height:1px;background:#808080;"></div>
<div style="left:353px;top:841px;width:673px;height:1px;background:#404040;"></div>
<div style="left:354px;top:356px;width:53px;height:22px;background:#d4d0c8;"></div>
<div style="left:355px;top:355px;width:52px;height:1px;background:#ffffff;"></div>
<div style="left:354px;top:356px;width:1px;height:1px;background:#ffffff;"></div>
<div style="left:353px;top:357px;width:1px;height:21px;background:#ffffff;"></div>
<div style="left:407px;top:356px;width:1px;height:22px;background:#808080;"></div>
<div style="left:408px;top:357px;width:1px;height:21px;background:#404040;"></div>
<span class="t" style="left:361px;top:359.94px;font-size:12px;color:#000;font-weight:normal;letter-spacing:-0.4px;">General</span>
<div style="left:409px;top:358px;width:44px;height:19px;background:#d4d0c8;"></div>
<div style="left:409px;top:357px;width:44px;height:1px;background:#ffffff;"></div>
<div style="left:453px;top:358px;width:1px;height:19px;background:#808080;"></div>
<div style="left:454px;top:359px;width:1px;height:18px;background:#404040;"></div>
<span class="t" style="left:413px;top:361.94px;font-size:12px;color:#000;font-weight:normal;letter-spacing:-0.3px;">Details</span>
<div style="left:370px;top:396px;width:604px;height:256px;background:#d4d0c8;"></div>
<div style="left:368px;top:394px;width:624px;height:1px;background:#808080;"></div>
<div style="left:368px;top:394px;width:1px;height:261px;background:#808080;"></div>
<div style="left:369px;top:395px;width:622px;height:1px;background:#404040;"></div>
<div style="left:369px;top:395px;width:1px;height:259px;background:#404040;"></div>
<div style="left:368px;top:654px;width:624px;height:1px;background:#ffffff;"></div>
<div style="left:991px;top:394px;width:1px;height:261px;background:#ffffff;"></div>
<div style="left:369px;top:653px;width:622px;height:1px;background:#d4d0c8;"></div>
<div style="left:990px;top:395px;width:1px;height:259px;background:#d4d0c8;"></div>
<div style="left:974px;top:412px;width:16px;height:224px;background:repeating-conic-gradient(#ffffff 0 25%, #d4d0c8 0 50%) 0 0/2px 2px;"></div>
<div style="left:974px;top:396px;width:16px;height:16px;background:#d4d0c8;"></div>
<div style="left:974px;top:396px;width:16px;height:1px;background:#d4d0c8;"></div>
<div style="left:974px;top:396px;width:1px;height:16px;background:#d4d0c8;"></div>
<div style="left:975px;top:397px;width:14px;height:1px;background:#ffffff;"></div>
<div style="left:975px;top:397px;width:1px;height:14px;background:#ffffff;"></div>
<div style="left:974px;top:411px;width:16px;height:1px;background:#404040;"></div>
<div style="left:989px;top:396px;width:1px;height:16px;background:#404040;"></div>
<div style="left:975px;top:410px;width:14px;height:1px;background:#808080;"></div>
<div style="left:988px;top:397px;width:1px;height:14px;background:#808080;"></div>
<svg style="left:978px;top:402px" width="7" height="4" viewBox="0 0 7 4"><path d="M3.5 0 L7 4 L0 4z" fill="#000"/></svg>
<div style="left:974px;top:412px;width:16px;height:72px;background:#d4d0c8;"></div>
<div style="left:974px;top:412px;width:16px;height:1px;background:#d4d0c8;"></div>
<div style="left:974px;top:412px;width:1px;height:72px;background:#d4d0c8;"></div>
<div style="left:975px;top:413px;width:14px;height:1px;background:#ffffff;"></div>
<div style="left:975px;top:413px;width:1px;height:70px;background:#ffffff;"></div>
<div style="left:974px;top:483px;width:16px;height:1px;background:#404040;"></div>
<div style="left:989px;top:412px;width:1px;height:72px;background:#404040;"></div>
<div style="left:975px;top:482px;width:14px;height:1px;background:#808080;"></div>
<div style="left:988px;top:413px;width:1px;height:70px;background:#808080;"></div>
<div style="left:974px;top:638px;width:16px;height:15px;background:#d4d0c8;"></div>
<div style="left:974px;top:638px;width:16px;height:1px;background:#d4d0c8;"></div>
<div style="left:974px;top:638px;width:1px;height:15px;background:#d4d0c8;"></div>
<div style="left:975px;top:639px;width:14px;height:1px;background:#ffffff;"></div>
<div style="left:975px;top:639px;width:1px;height:13px;background:#ffffff;"></div>
<div style="left:974px;top:652px;width:16px;height:1px;background:#404040;"></div>
<div style="left:989px;top:638px;width:1px;height:15px;background:#404040;"></div>
<div style="left:975px;top:651px;width:14px;height:1px;background:#808080;"></div>
<div style="left:988px;top:639px;width:1px;height:13px;background:#808080;"></div>
<svg style="left:978px;top:643px" width="7" height="4" viewBox="0 0 7 4"><path d="M0 0 L7 0 L3.5 4z" fill="#000"/></svg>
<span class="t" style="left:371px;top:398.94px;font-size:12px;color:#000;font-weight:normal;letter-spacing:0px;transform:scaleX(0.9812);transform-origin:0 0;">An account was successfully logged on.</span>
<span class="t" style="left:371px;top:428.94px;font-size:12px;color:#000;font-weight:normal;letter-spacing:0px;transform:scaleX(0.9333);transform-origin:0 0;">Subject:</span>
<span class="t" style="left:419px;top:443.94px;font-size:12px;color:#000;font-weight:normal;letter-spacing:0px;transform:scaleX(0.9833);transform-origin:0 0;">Security ID:</span>
<span class="t" style="left:563px;top:443.94px;font-size:12px;color:#000;font-weight:normal;letter-spacing:0px;transform:scaleX(0.8958);transform-origin:0 0;">SYSTEM</span>
<span class="t" style="left:419px;top:458.94px;font-size:12px;color:#000;font-weight:normal;letter-spacing:0px;transform:scaleX(1.0247);transform-origin:0 0;">Account Name:</span>
<span class="t" style="left:563px;top:458.94px;font-size:12px;color:#000;font-weight:normal;letter-spacing:0px;transform:scaleX(0.9487);transform-origin:0 0;">WIN-NDKLH123U36$</span>
<span class="t" style="left:419px;top:473.94px;font-size:12px;color:#000;font-weight:normal;letter-spacing:0px;transform:scaleX(1.0110);transform-origin:0 0;">Account Domain:</span>
<span class="t" style="left:563px;top:473.94px;font-size:12px;color:#000;font-weight:normal;letter-spacing:0px;transform:scaleX(0.9012);transform-origin:0 0;">WORKGROUP</span>
<span class="t" style="left:419px;top:488.94px;font-size:12px;color:#000;font-weight:normal;letter-spacing:0px;transform:scaleX(1.0200);transform-origin:0 0;">Logon ID:</span>
<span class="t" style="left:563px;top:488.94px;font-size:12px;color:#000;font-weight:normal;letter-spacing:0px;transform:scaleX(0.9062);transform-origin:0 0;">0x3e7</span>
<span class="t" style="left:371px;top:518.94px;font-size:12px;color:#000;font-weight:normal;letter-spacing:0px;transform:scaleX(0.9851);transform-origin:0 0;">Logon Type:</span>
<span class="t" style="left:563px;top:518.94px;font-size:12px;color:#000;font-weight:normal;letter-spacing:0px;">2</span>
<span class="t" style="left:371px;top:548.94px;font-size:12px;color:#000;font-weight:normal;letter-spacing:0px;transform:scaleX(0.9846);transform-origin:0 0;">New Logon:</span>
<span class="t" style="left:419px;top:563.94px;font-size:12px;color:#000;font-weight:normal;letter-spacing:0px;transform:scaleX(0.9833);transform-origin:0 0;">Security ID:</span>
<span class="t" style="left:563px;top:563.94px;font-size:12px;color:#000;font-weight:normal;letter-spacing:0px;transform:scaleX(0.9946);transform-origin:0 0;">WIN-NDKLH123U36\Administrator</span>
<span class="t" style="left:419px;top:578.94px;font-size:12px;color:#000;font-weight:normal;letter-spacing:0px;transform:scaleX(1.0247);transform-origin:0 0;">Account Name:</span>
<span class="t" style="left:563px;top:578.94px;font-size:12px;color:#000;font-weight:normal;letter-spacing:0px;transform:scaleX(1.0282);transform-origin:0 0;">Administrator</span>
<span class="t" style="left:419px;top:593.94px;font-size:12px;color:#000;font-weight:normal;letter-spacing:0px;transform:scaleX(1.0110);transform-origin:0 0;">Account Domain:</span>
<span class="t" style="left:563px;top:593.94px;font-size:12px;color:#000;font-weight:normal;letter-spacing:0px;transform:scaleX(0.9545);transform-origin:0 0;">WIN-NDKLH123U36</span>
<span class="t" style="left:419px;top:608.94px;font-size:12px;color:#000;font-weight:normal;letter-spacing:0px;transform:scaleX(1.0200);transform-origin:0 0;">Logon ID:</span>
<span class="t" style="left:563px;top:608.94px;font-size:12px;color:#000;font-weight:normal;letter-spacing:0px;transform:scaleX(0.8913);transform-origin:0 0;">0xe5261</span>
<span class="t" style="left:419px;top:623.94px;font-size:12px;color:#000;font-weight:normal;letter-spacing:0px;transform:scaleX(0.9706);transform-origin:0 0;">Logon GUID:</span>
<span class="t" style="left:563px;top:623.94px;font-size:12px;color:#000;font-weight:normal;letter-spacing:0px;transform:scaleX(0.9286);transform-origin:0 0;">{00000000-0000-0000-0000-000000000000}</span>
<span class="t" style="left:366px;top:671.94px;font-size:12px;color:#000;font-weight:normal;letter-spacing:0px;transform:scaleX(1.0175);transform-origin:0 0;">Log Name:</span>
<span class="t" style="left:473px;top:671.94px;font-size:12px;color:#000;font-weight:normal;letter-spacing:0px;transform:scaleX(1.0000);transform-origin:0 0;">Security</span>
<span class="t" style="left:366px;top:692.94px;font-size:12px;color:#000;font-weight:normal;letter-spacing:0px;transform:scaleX(0.9750);transform-origin:0 0;">Source:</span>
<span class="t" style="left:473px;top:692.94px;font-size:12px;color:#000;font-weight:normal;letter-spacing:0px;transform:scaleX(1.0208);transform-origin:0 0;">Microsoft Windows security</span>
<span class="t" style="left:631px;top:692.94px;font-size:12px;color:#000;font-weight:normal;letter-spacing:0px;transform:scaleX(1.0000);transform-origin:0 0;">Logged:</span>
<span class="t" style="left:719px;top:692.94px;font-size:12px;color:#000;font-weight:normal;letter-spacing:0px;transform:scaleX(0.9655);transform-origin:0 0;">1/16/2020 1:51:45 PM</span>
<span class="t" style="left:366px;top:713.94px;font-size:12px;color:#000;font-weight:normal;letter-spacing:0px;transform:scaleX(0.9583);transform-origin:0 0;">Event ID:</span>
<span class="t" style="left:473px;top:713.94px;font-size:12px;color:#000;font-weight:normal;letter-spacing:0px;transform:scaleX(0.8519);transform-origin:0 0;">4624</span>
<span class="t" style="left:631px;top:713.94px;font-size:12px;color:#000;font-weight:normal;letter-spacing:0px;transform:scaleX(1.0132);transform-origin:0 0;">Task Category:</span>
<span class="t" style="left:719px;top:713.94px;font-size:12px;color:#000;font-weight:normal;letter-spacing:0px;transform:scaleX(1.0625);transform-origin:0 0;">Logon</span>
<span class="t" style="left:366px;top:734.94px;font-size:12px;color:#000;font-weight:normal;letter-spacing:0px;transform:scaleX(1.0000);transform-origin:0 0;">Level:</span>
<span class="t" style="left:473px;top:734.94px;font-size:12px;color:#000;font-weight:normal;letter-spacing:0px;transform:scaleX(1.0517);transform-origin:0 0;">Information</span>
<span class="t" style="left:631px;top:734.94px;font-size:12px;color:#000;font-weight:normal;letter-spacing:0px;transform:scaleX(0.9815);transform-origin:0 0;">Keywords:</span>
<span class="t" style="left:719px;top:734.94px;font-size:12px;color:#000;font-weight:normal;letter-spacing:0px;transform:scaleX(0.9605);transform-origin:0 0;">Audit Success</span>
<span class="t" style="left:366px;top:755.94px;font-size:12px;color:#000;font-weight:normal;letter-spacing:0px;transform:scaleX(0.9630);transform-origin:0 0;">User:</span>
<span class="t" style="left:473px;top:755.94px;font-size:12px;color:#000;font-weight:normal;letter-spacing:0px;transform:scaleX(1.1579);transform-origin:0 0;">N/A</span>
<span class="t" style="left:631px;top:755.94px;font-size:12px;color:#000;font-weight:normal;letter-spacing:0px;transform:scaleX(1.0182);transform-origin:0 0;">Computer:</span>
<span class="t" style="left:719px;top:755.94px;font-size:12px;color:#000;font-weight:normal;letter-spacing:0px;transform:scaleX(0.9545);transform-origin:0 0;">WIN-NDKLH123U36</span>
<span class="t" style="left:366px;top:776.94px;font-size:12px;color:#000;font-weight:normal;letter-spacing:0px;transform:scaleX(1.0000);transform-origin:0 0;">OpCode:</span>
<span class="t" style="left:473px;top:776.94px;font-size:12px;color:#000;font-weight:normal;letter-spacing:0px;transform:scaleX(1.0526);transform-origin:0 0;">Info</span>
<span class="t" style="left:366px;top:797.94px;font-size:12px;color:#000;font-weight:normal;letter-spacing:0px;transform:scaleX(1.0543);transform-origin:0 0;">More Information:</span>
<span class="t" style="left:476px;top:797.94px;font-size:12px;color:#0000ff;font-weight:normal;letter-spacing:0px;transform:scaleX(0.9916);transform-origin:0 0;text-decoration:underline">Event Log Online Help</span>
</body></html>
